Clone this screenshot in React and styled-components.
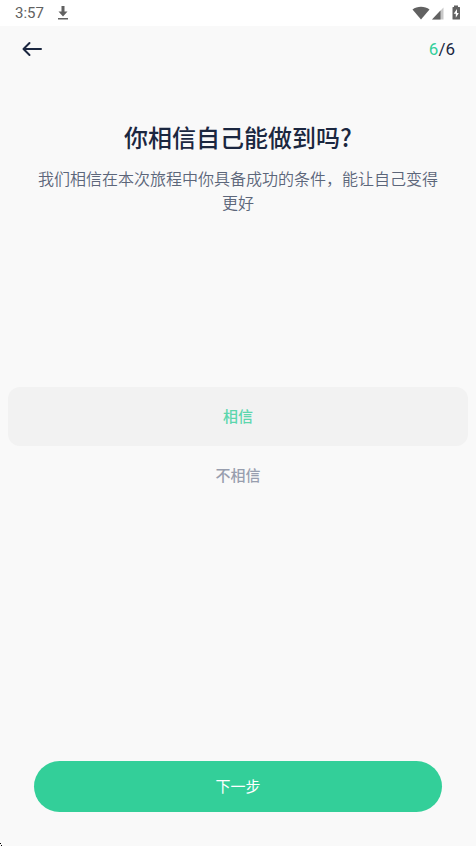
import React, { useState } from "react";
import styled, { createGlobalStyle } from "styled-components";

const answers = [
  { value: "yes", label: "相信" },
  { value: "no", label: "不相信" },
];

function App() {
  const [answer, setAnswer] = useState("yes");
  const handleSubmit = (e) => {
    e.preventDefault();
  };
  return (
    <>
      <GlobalStyle />
      <Screen>
        <StatusBar>
          <Time>3:57</Time>
          <DownloadIcon viewBox="0 0 12 16" aria-hidden="true">
            <path d="M4.500 1h3v5.500H10.500L6 11.500 1.500 6.500h3z" />
            <path d="M1 13h10v1.500H1z" />
          </DownloadIcon>
          <StatusIcons viewBox="0 0 50 16" aria-hidden="true">
            <path d="M0.500 4.500C5 0.700 13 0.700 17.500 4.500L9 14.500z" />
            <path d="M31.500 2.500v12H20z" opacity="0.35" />
            <path d="M28.500 5.500v9H20z" />
            <path
              fillRule="evenodd"
              d="M42 0.500h4v1.500h1.500q0.500 0 0.500 0.500v11.500q0 0.500-0.500 0.500h-6.500q-0.500 0-0.500-0.500V2.500q0-0.500 0.500-0.500h1zM45 4l-3.300 4.700h2.100v4l3-4.800h-1.800z"
            />
          </StatusIcons>
        </StatusBar>
        <Header>
          <BackButton type="button" aria-label="返回">
            <svg width="20" height="18" viewBox="0 0 20 18" aria-hidden="true">
              <path d="M19 9H2M7.500 3L1.500 9L7.500 15" />
            </svg>
          </BackButton>
          <Step>
            <span>6</span>/6
          </Step>
        </Header>
        <Question onSubmit={handleSubmit}>
          <Intro>
            <h1 id="question">你相信自己能做到吗?</h1>
            <p>我们相信在本次旅程中你具备成功的条件，能让自己变得更好</p>
          </Intro>
          <Options role="radiogroup" aria-labelledby="question">
            {answers.map((item) => (
              <Option key={item.value} $active={answer === item.value}>
                <input
                  type="radio"
                  name="answer"
                  value={item.value}
                  checked={answer === item.value}
                  onChange={() => setAnswer(item.value)}
                />
                {item.label}
              </Option>
            ))}
          </Options>
          <NextButton type="submit">下一步</NextButton>
        </Question>
        <CornerMark viewBox="0 0 2 3" aria-hidden="true">
          <path d="M0 0h1v1H0zM1 2h1v1H1z" />
        </CornerMark>
      </Screen>
    </>
  );
}

export default App;

const GlobalStyle = createGlobalStyle`
  * {
    box-sizing: border-box;
  }
  body {
    margin: 0;
    background: #f9f9f9;
    font-family: Roboto, "Noto Sans CJK SC", sans-serif;
  }
  button {
    border: none;
    padding: 0;
    font-family: inherit;
    cursor: pointer;
  }
`;
const Screen = styled.div`
  position: relative;
  display: flex;
  flex-direction: column;
  min-height: 100vh;
`;
const StatusBar = styled.div`
  display: flex;
  align-items: center;
  height: 26px;
  padding: 0 14px 0 15px;
  background: white;
  color: #616161;
`;
const Time = styled.span`
  font-size: 15px;
  line-height: 26px;
`;
const DownloadIcon = styled.svg`
  width: 12px;
  height: 16px;
  margin-left: 13px;
  fill: currentColor;
`;
const StatusIcons = styled.svg`
  width: 50px;
  height: 16px;
  margin-left: auto;
  fill: currentColor;
`;
const Header = styled.header`
  display: flex;
  align-items: center;
  justify-content: space-between;
  height: 46px;
  padding: 0 21px 0 22px;
`;
const BackButton = styled.button`
  display: flex;
  align-items: center;
  height: 44px;
  background: transparent;
  svg {
    fill: none;
    stroke: #1b2740;
    stroke-width: 2;
    stroke-linecap: round;
    stroke-linejoin: round;
  }
`;
const Step = styled.span`
  font-size: 17px;
  line-height: 24px;
  color: #1b2740;
  span {
    color: #33cf99;
  }
`;
const Question = styled.form`
  display: flex;
  flex-direction: column;
  flex: 1;
  padding: 47px 0 34px;
`;
const Intro = styled.div`
  padding: 0 34px;
  text-align: center;
  h1 {
    margin: 0;
    font-size: 24px;
    line-height: 36px;
    font-weight: 500;
    font-family: "Noto Sans CJK SC", sans-serif;
    color: #1b2740;
  }
  p {
    margin: 11px 0 0;
    font-size: 16px;
    line-height: 24px;
    font-weight: 350;
    font-family: "Noto Sans CJK SC", sans-serif;
    color: #5c667a;
  }
`;
const Options = styled.div`
  margin: 173px 8px 40px;
`;
const Option = styled.label`
  display: flex;
  align-items: center;
  justify-content: center;
  height: 59px;
  border-radius: 12px;
  background: ${(props) => (props.$active ? "#f2f2f2" : "transparent")};
  color: ${(props) => (props.$active ? "#5cd6ad" : "#989eae")};
  font-size: 15px;
  line-height: 22px;
  font-weight: 500;
  cursor: pointer;
  input {
    position: absolute;
    opacity: 0;
    pointer-events: none;
  }
`;
const NextButton = styled.button`
  height: 51px;
  margin: auto 34px 0;
  border-radius: 26px;
  background: #33cf99;
  color: white;
  font-size: 15px;
  line-height: 22px;
`;
const CornerMark = styled.svg`
  position: absolute;
  left: 0;
  bottom: 0;
  width: 2px;
  height: 3px;
`;
